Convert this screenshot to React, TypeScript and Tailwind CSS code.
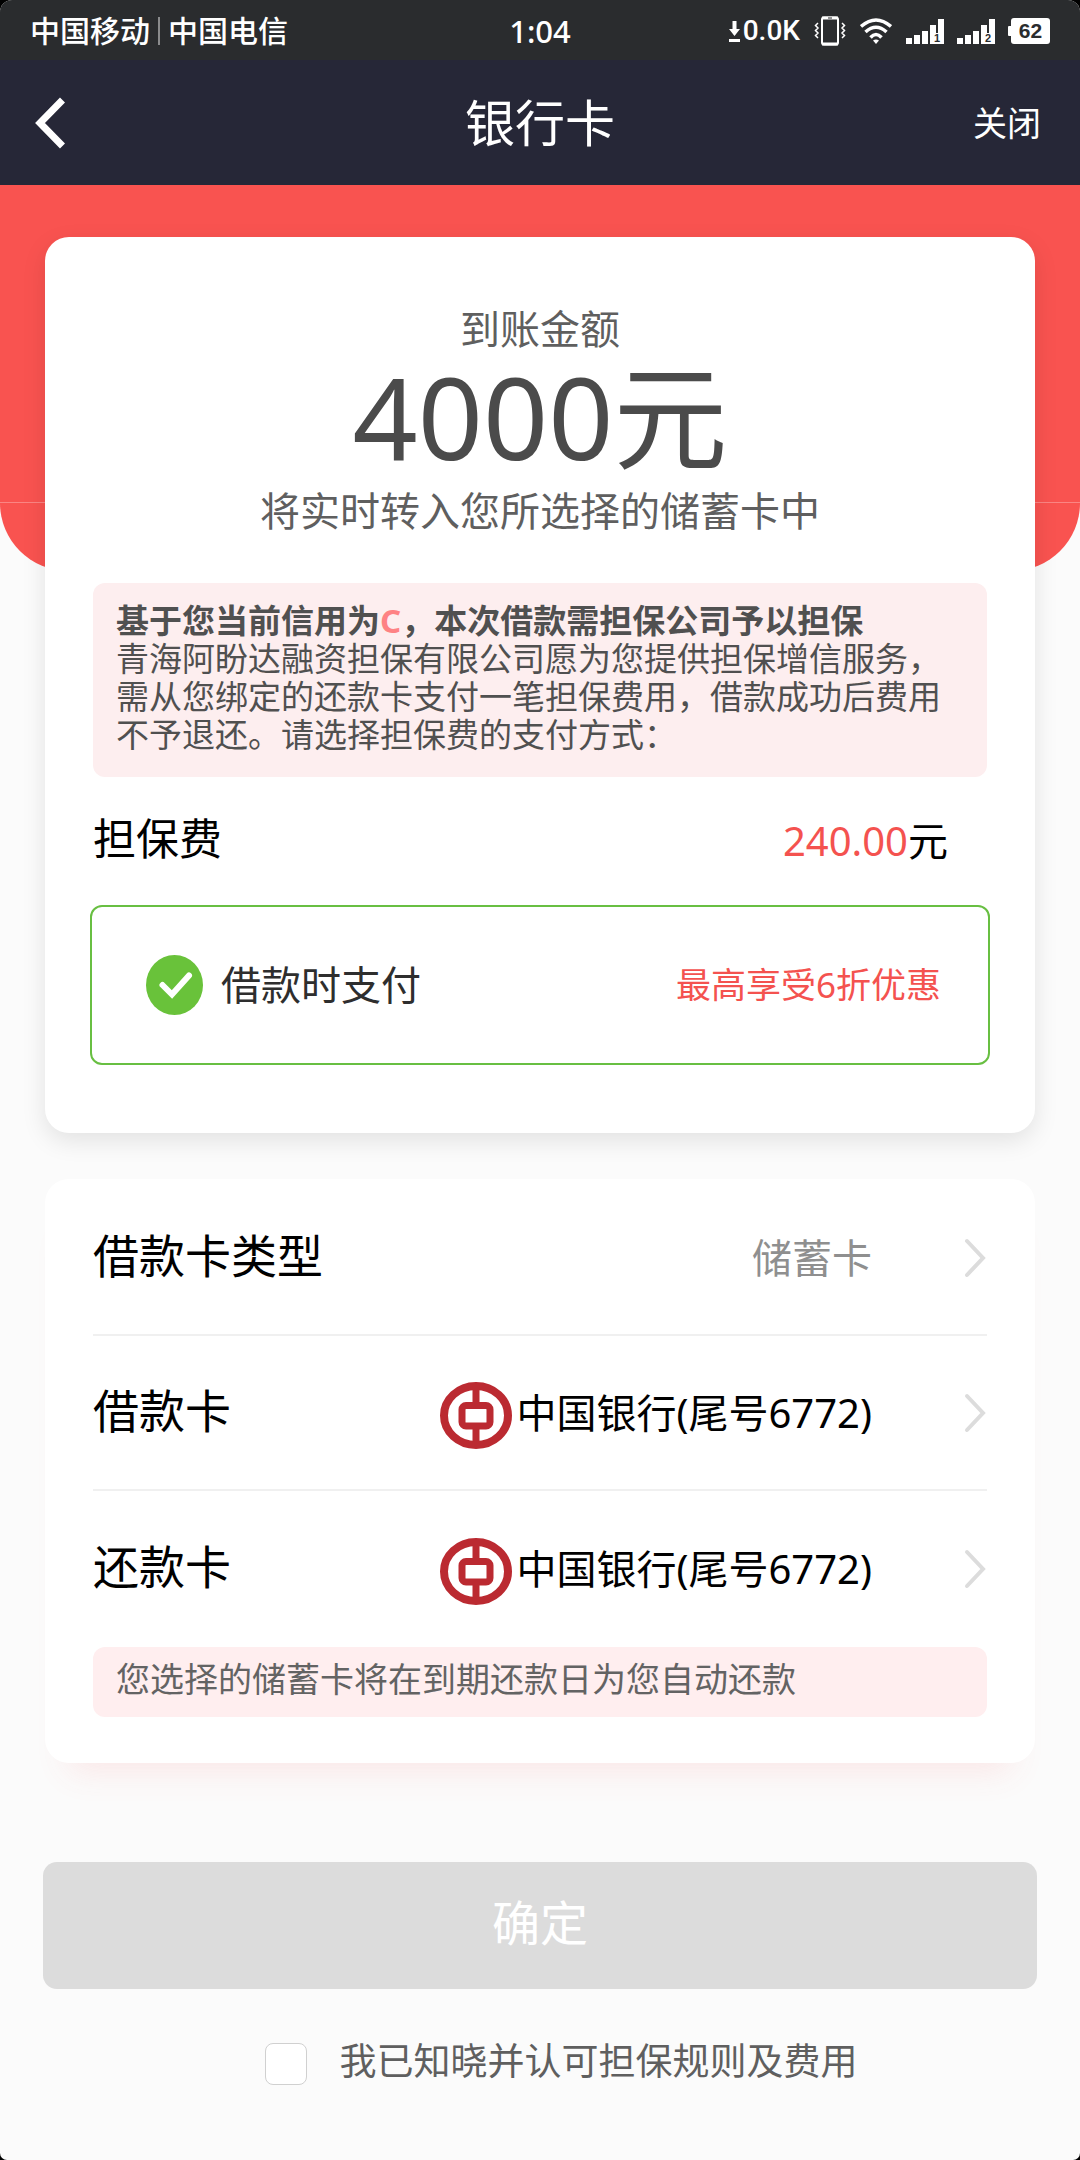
import React from "react";

function SignalIcon({ sim }: { sim: string }) {
  return (
    <svg width="38" height="25" viewBox="0 0 38 25" fill="#fff" aria-hidden="true">
      <rect x="0" y="19" width="6" height="6" />
      <rect x="8" y="16" width="6" height="9" />
      <rect x="16" y="12" width="6" height="13" />
      <rect x="24" y="6" width="6" height="19" />
      <rect x="32" y="0" width="6" height="25" />
      <rect x="27" y="14" width="8" height="11" />
      <text x="31" y="23" textAnchor="middle" fontFamily="Liberation Sans, sans-serif" fontWeight="700" fontSize="11" fill="#2a2c2e">
        {sim}
      </text>
    </svg>
  );
}

function StatusBar() {
  return (
    <div className="grid h-[60px] grid-cols-[1fr_auto_1fr] items-center bg-[#2a2c2e] px-[30px] pt-[2px] font-medium text-white">
      <div className="flex items-center text-[30px] leading-[40px]">
        <span>中国移动</span>
        <span className="mx-[8px] h-[28px] w-[2px] bg-[#8a8b8c]" />
        <span>中国电信</span>
      </div>
      <div className="text-[31px] leading-[40px]">1:04</div>
      <div className="flex items-center justify-end">
        <svg width="11" height="21" viewBox="0 0 11 21" fill="#fff" aria-hidden="true">
          <path d="M3.500 0h4v8H11L5.500 15 0 8h3.500z" />
          <rect x="0" y="18" width="11" height="3" />
        </svg>
        <span className="mr-[14px] ml-[3px] font-['Roboto'] text-[28px] leading-[40px]">0.0K</span>
        <svg width="32" height="30" viewBox="0 0 32 30" fill="none" stroke="#fff" aria-hidden="true">
          <rect x="8" y="1.500" width="16" height="27" rx="2" strokeWidth="2" />
          <path d="M8 2h16M8 28h16" strokeWidth="3" />
          <path d="M4 7L1.500 9.500 4 12 1.500 14.500 4 17 1.500 19.500 4 22M28 7l2.500 2.500L28 12l2.500 2.500L28 17l2.500 2.500L28 22" strokeWidth="1.500" />
          <path d="M14 2h4" stroke="#2a2c2e" strokeWidth="1" />
        </svg>
        <svg className="ml-[14px]" width="32" height="26" viewBox="0 0 32 26" fill="none" stroke="#fff" strokeWidth="3.500" aria-hidden="true">
          <path d="M1 8.500Q16-4.500 31 8.500" />
          <path d="M5.500 14Q16 4.500 26.500 14" />
          <path d="M10.500 19.500Q16 13.500 21.500 19.500" />
          <path d="M16 26l-3-3.500q3-2 6 0z" fill="#fff" stroke="none" />
        </svg>
        <div className="ml-[14px] flex gap-[13px]">
          <SignalIcon sim="1" />
          <SignalIcon sim="2" />
        </div>
        <div className="ml-[13px] flex items-center">
          <span className="h-[10px] w-[3px] rounded-l-[1px] bg-white" />
          <span className="h-[26px] w-[39px] rounded-[3px] bg-white text-center font-['Liberation_Sans'] text-[21px] leading-[26px] font-bold text-[#2a2c2e]">
            62
          </span>
        </div>
      </div>
    </div>
  );
}

function Header() {
  return (
    <header className="grid h-[125px] grid-cols-[1fr_auto_1fr] items-center bg-[#262737] px-[35px] text-white">
      <button type="button" aria-label="返回" className="justify-self-start">
        <svg width="32" height="52" viewBox="0 0 32 52" fill="none" stroke="#fff" strokeWidth="7" aria-hidden="true">
          <path d="M27.500 3L5 26l22.500 23" />
        </svg>
      </button>
      <h1 className="text-[50px] leading-[60px]">银行卡</h1>
      <button type="button" className="mr-[4px] justify-self-end text-[34px] leading-[60px]">
        关闭
      </button>
    </header>
  );
}

function BankLogo() {
  return (
    <svg className="mt-[5px]" width="72" height="67" viewBox="0 0 72 67" fill="none" stroke="#bb2a31" aria-hidden="true">
      <ellipse cx="36" cy="33.500" rx="32" ry="29.500" strokeWidth="8" />
      <rect x="22" y="23.500" width="28" height="20.500" rx="4" strokeWidth="7" />
      <path d="M36 4v18M36 45v18" strokeWidth="7" />
    </svg>
  );
}

function Chevron() {
  return (
    <svg width="24" height="42" viewBox="0 0 24 42" fill="none" stroke="#dcdcdc" strokeWidth="4" strokeLinecap="round" aria-hidden="true">
      <path d="M4 4l16 17L4 38" />
    </svg>
  );
}

function Row({ label, divider, children }: { label: string; divider?: boolean; children: React.ReactNode }) {
  return (
    <button
      type="button"
      className={
        divider
          ? "flex h-[155px] w-full items-center border-b-2 border-[#f0f0f0] text-left"
          : "flex h-[155px] w-full items-center text-left"
      }
    >
      <span className="pb-[5px] text-[46px] leading-[60px]">{label}</span>
      <span className="mr-[91px] ml-auto flex items-center gap-[4px] text-[40px] leading-[60px]">{children}</span>
      <Chevron />
    </button>
  );
}

export default function App() {
  return (
    <div className="min-h-screen bg-black font-['Noto_Sans','Noto_Sans_CJK_SC',sans-serif]" lang="zh-CN">
      <div className="min-h-screen overflow-hidden rounded-t-[12px] rounded-b-[7px] bg-[#fbfbfb]">
        <StatusBar />
        <Header />

        <div className="h-[388px]">
          <div className="h-[317px] bg-[#f95350]" />
          <div className="h-px bg-[#fb8583]" />
          <div className="h-[68px] rounded-b-[68px] bg-[#f95350]" />
        </div>

        <main className="relative -mt-[336px] px-[45px] pb-[40px]">
          <section className="rounded-[24px] bg-white px-[45px] pt-[64px] pb-[68px] shadow-[0_8px_24px_rgba(0,0,0,0.1)]">
            <div className="text-center text-[40px] text-[#5f5f5f]">
              <p className="leading-[56px]">到账金额</p>
              <p className="text-[114px] leading-[118px] text-[#4b4b4b]">4000元</p>
              <p className="leading-[72px]">将实时转入您所选择的储蓄卡中</p>
            </div>

            <div className="mx-[3px] mt-[36px] rounded-[12px] bg-[#fdeeef] px-[23px] pt-[19px] pb-[23px] text-[33px] leading-[38px] text-[#505050]">
              <p className="font-bold">
                基于您当前信用为<span className="text-[#fe8284]">C</span>，本次借款需担保公司予以担保
              </p>
              <p>
                青海阿盼达融资担保有限公司愿为您提供担保增信服务，需从您绑定的还款卡支付一笔担保费用，借款成功后费用不予退还。请选择担保费的支付方式：
              </p>
            </div>

            <div className="mx-[3px] flex h-[128px] items-center justify-between pr-[39px]">
              <span className="pb-[5px] text-[43px] leading-[60px] text-black">担保费</span>
              <span className="text-[40px] leading-[60px] text-black">
                <span className="text-[#f4524f]">240.00</span>元
              </span>
            </div>

            <label className="flex h-[160px] items-center rounded-[12px] border-2 border-[#68bf42] pr-[47px] pl-[54px]">
              <input type="radio" name="pay-time" defaultChecked className="sr-only" />
              <svg width="57" height="60" viewBox="0 0 57 60" aria-hidden="true">
                <ellipse cx="28.500" cy="30" rx="28.500" ry="30" fill="#69c23a" />
                <path d="M16.500 30l9.500 9.500L43 20.500" fill="none" stroke="#fff" strokeWidth="6" strokeLinecap="round" />
              </svg>
              <span className="ml-[18px] text-[40px] leading-[60px] text-[#2e2e2e]">借款时支付</span>
              <span className="ml-auto text-[35px] leading-[60px] text-[#f4524f]">最高享受6折优惠</span>
            </label>
          </section>

          <section className="mt-[46px] rounded-[24px] bg-white px-[48px] pt-[2px] pb-[46px] text-black shadow-[0_32px_32px_-24px_rgba(249,83,80,0.12)]">
            <Row label="借款卡类型" divider>
              <span className="text-[#8f8f8f]">储蓄卡</span>
            </Row>
            <Row label="借款卡" divider>
              <BankLogo />
              <span>中国银行(尾号6772)</span>
            </Row>
            <Row label="还款卡">
              <BankLogo />
              <span>中国银行(尾号6772)</span>
            </Row>
            <p className="mt-px rounded-[12px] bg-[#ffeeef] px-[23px] pt-[2px] pb-[8px] text-[34px] leading-[60px] text-[#636363]">
              您选择的储蓄卡将在到期还款日为您自动还款
            </p>
          </section>

          <button
            type="button"
            className="-mx-[2px] mt-[99px] block h-[127px] w-[calc(100%+4px)] rounded-[14px] bg-[#dcdcdc] pb-[5px] text-[48px] text-white"
          >
            确定
          </button>

          <label className="mt-[42px] flex items-center justify-center gap-[33px] pl-[42px] text-[37px] leading-[60px] text-[#5f5f5f]">
            <input
              type="checkbox"
              className="h-[42px] w-[42px] appearance-none rounded-[8px] border border-[#d0d0d0] bg-white"
            />
            <span className="pb-[5px]">我已知晓并认可担保规则及费用</span>
          </label>
        </main>
      </div>
    </div>
  );
}
